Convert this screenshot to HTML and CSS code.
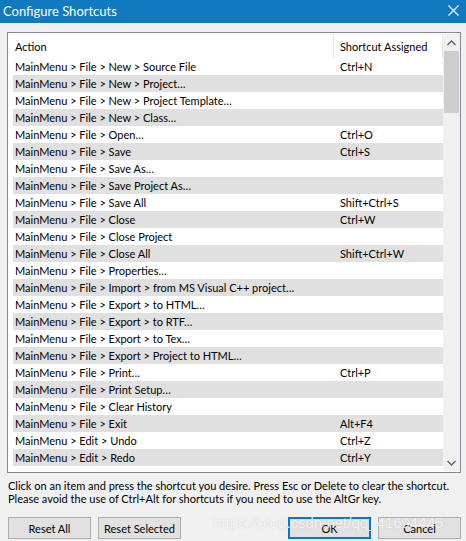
FILE: index.html
```html
<!DOCTYPE html>
<html>
<head>
<meta charset="utf-8">
<title>Configure Shortcuts</title>
<link rel="stylesheet" href="styles.css">
</head>
<body>
<div class="window">
  <div class="titlebar">
    <span class="title">Configure Shortcuts</span>
    <svg class="close" width="11" height="11" viewBox="0 0 11 11"><path d="M0.5 0.5 L10.5 10.5 M10.5 0.5 L0.5 10.5" stroke="#fff" stroke-width="1.2" fill="none"/></svg>
  </div>
  <div class="body">
    <div class="list">
      <div class="content">
        <div class="header">
          <div class="hcell first">Action</div>
          <div class="hcell second">Shortcut Assigned</div>
        </div>
        <div class="rows">
          <div class="row"><span class="c1">MainMenu &gt; File &gt; New &gt; Source File</span><span class="c2">Ctrl+N</span></div>
          <div class="row"><span class="c1">MainMenu &gt; File &gt; New &gt; Project…</span><span class="c2"></span></div>
          <div class="row"><span class="c1">MainMenu &gt; File &gt; New &gt; Project Template…</span><span class="c2"></span></div>
          <div class="row"><span class="c1">MainMenu &gt; File &gt; New &gt; Class…</span><span class="c2"></span></div>
          <div class="row"><span class="c1">MainMenu &gt; File &gt; Open…</span><span class="c2">Ctrl+O</span></div>
          <div class="row"><span class="c1">MainMenu &gt; File &gt; Save</span><span class="c2">Ctrl+S</span></div>
          <div class="row"><span class="c1">MainMenu &gt; File &gt; Save As…</span><span class="c2"></span></div>
          <div class="row"><span class="c1">MainMenu &gt; File &gt; Save Project As…</span><span class="c2"></span></div>
          <div class="row"><span class="c1">MainMenu &gt; File &gt; Save All</span><span class="c2">Shift+Ctrl+S</span></div>
          <div class="row"><span class="c1">MainMenu &gt; File &gt; Close</span><span class="c2">Ctrl+W</span></div>
          <div class="row"><span class="c1">MainMenu &gt; File &gt; Close Project</span><span class="c2"></span></div>
          <div class="row"><span class="c1">MainMenu &gt; File &gt; Close All</span><span class="c2">Shift+Ctrl+W</span></div>
          <div class="row"><span class="c1">MainMenu &gt; File &gt; Properties…</span><span class="c2"></span></div>
          <div class="row"><span class="c1">MainMenu &gt; File &gt; Import &gt; from MS Visual C++ project…</span><span class="c2"></span></div>
          <div class="row"><span class="c1">MainMenu &gt; File &gt; Export &gt; to HTML…</span><span class="c2"></span></div>
          <div class="row"><span class="c1">MainMenu &gt; File &gt; Export &gt; to RTF…</span><span class="c2"></span></div>
          <div class="row"><span class="c1">MainMenu &gt; File &gt; Export &gt; to Tex…</span><span class="c2"></span></div>
          <div class="row"><span class="c1">MainMenu &gt; File &gt; Export &gt; Project to HTML…</span><span class="c2"></span></div>
          <div class="row"><span class="c1">MainMenu &gt; File &gt; Print…</span><span class="c2">Ctrl+P</span></div>
          <div class="row"><span class="c1">MainMenu &gt; File &gt; Print Setup…</span><span class="c2"></span></div>
          <div class="row"><span class="c1">MainMenu &gt; File &gt; Clear History</span><span class="c2"></span></div>
          <div class="row"><span class="c1">MainMenu &gt; File &gt; Exit</span><span class="c2">Alt+F4</span></div>
          <div class="row"><span class="c1">MainMenu &gt; Edit &gt; Undo</span><span class="c2">Ctrl+Z</span></div>
          <div class="row"><span class="c1">MainMenu &gt; Edit &gt; Redo</span><span class="c2">Ctrl+Y</span></div>
        </div>
      </div>
      <div class="scrollbar">
        <div class="arrow"><svg width="9" height="6" viewBox="0 0 9 6"><path d="M0.5 5 L4.5 1 L8.5 5" stroke="#606060" stroke-width="1.3" fill="none"/></svg></div>
        <div class="track"><div class="thumb"></div></div>
        <div class="arrow"><svg width="9" height="6" viewBox="0 0 9 6"><path d="M0.5 1 L4.5 5 L8.5 1" stroke="#606060" stroke-width="1.3" fill="none"/></svg></div>
      </div>
    </div>
    <div class="notes">
      <div>Click on an item and press the shortcut you desire. Press Esc or Delete to clear the shortcut.</div>
      <div>Please avoid the use of Ctrl+Alt for shortcuts if you need to use the AltGr key.</div>
    </div>
    <div class="buttons">
      <div class="group">
        <button class="btn">Reset All</button>
        <button class="btn">Reset Selected</button>
      </div>
      <div class="group">
        <button class="btn default">OK</button>
        <button class="btn">Cancel</button>
      </div>
    </div>
  </div>
  <div class="watermark">https://blog.csdn.net/qq_41694445</div>
</div>
</body>
</html>
```
FILE: styles.css
```css
html, body {
  margin: 0;
  padding: 0;
}
body {
  width: 466px;
  height: 541px;
  overflow: hidden;
  background: #f0f0f0;
  font-family: Lato, "Liberation Sans", sans-serif;
  font-size: 11px;
  color: #000;
}
.window {
  position: relative;
  width: 466px;
  height: 541px;
}
.titlebar {
  height: 23px;
  background: #1079bf;
  color: #fff;
  display: flex;
  align-items: center;
  justify-content: space-between;
  padding: 0 7px 0 3px;
}
.title {
  font-size: 13px;
  padding-bottom: 1px;
}
.close {
  display: block;
  margin-top: -2px;
}
.body {
  padding: 9px 5px 0 7px;
}
.list {
  height: 439px;
  border: 1px solid #828790;
  background: #fff;
  display: flex;
}
.content {
  width: 430px;
  padding: 1px 0 0 5px;
}
.header {
  height: 24px;
  display: flex;
}
.hcell {
  display: flex;
  align-items: center;
  height: 24px;
}
.hcell.first {
  width: 318px;
  padding-left: 2px;
  border-right: 1px solid #e5e5e5;
}
.hcell.second {
  flex: 1;
  padding-left: 6px;
  border-right: 1px solid #e5e5e5;
}
.row {
  height: 17px;
  display: flex;
  align-items: center;
}
.row:nth-child(even) {
  background: #e0e0e0;
}
.c1 {
  width: 319px;
  padding-left: 2px;
  white-space: nowrap;
}
.c2 {
  padding-left: 6px;
  white-space: nowrap;
}
.scrollbar {
  width: 17px;
  margin: 1px 0;
  background: #f0f0f0;
  display: flex;
  flex-direction: column;
}
.arrow {
  height: 17px;
  display: flex;
  align-items: center;
  justify-content: center;
}
.track {
  flex: 1;
  padding: 0 1px;
}
.thumb {
  height: 62px;
  background: #cdcdcd;
}
.notes {
  margin: 6px 0 0 1px;
  line-height: 13px;
  white-space: nowrap;
}
.buttons {
  margin-top: 12px;
  display: flex;
  justify-content: space-between;
  padding-left: 1px;
}
.group {
  display: flex;
  gap: 7px;
}
.btn {
  width: 83px;
  height: 22px;
  margin: 0;
  padding: 0;
  border: 1px solid #adadad;
  background: #e1e1e1;
  font-family: inherit;
  font-size: 11px;
  color: #000;
}
.btn.default {
  border: 2px solid #0078d7;
}
.watermark {
  position: absolute;
  left: 213px;
  top: 514px;
  font-family: "Liberation Sans", sans-serif;
  font-size: 15px;
  color: rgba(255, 255, 255, 0.8);
  text-shadow: 0 0 1px rgba(120, 120, 120, 0.35);
  white-space: nowrap;
}
```
